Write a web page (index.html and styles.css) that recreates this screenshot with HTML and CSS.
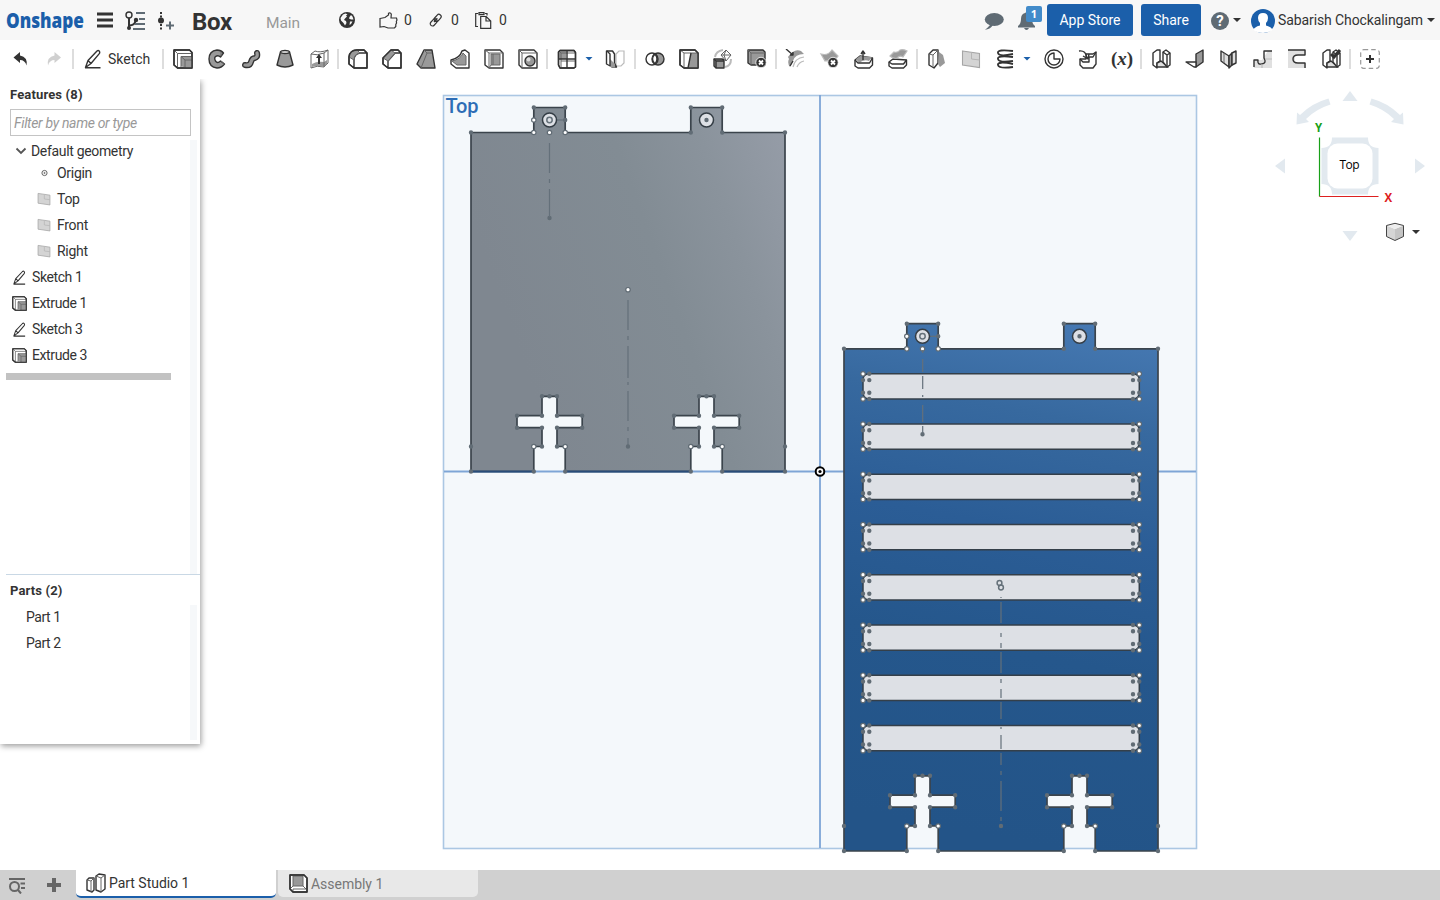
FILE: index.html
```html
<!DOCTYPE html>
<html lang="en">
<head>
<meta charset="utf-8">
<title>Box | Part Studio 1</title>
<link rel="stylesheet" href="styles.css">
</head>
<body>
<svg class="defs" width="0" height="0" aria-hidden="true">
  <defs>
    <symbol id="i-pencil" viewBox="0 0 20 20"><path class="ln" d="M2.500 18.500 5 11.500 14 2q1.200-1 2.200 0t.3 2.400L8 14.500 2.500 18.500zM5 11.500 8 14.500M2 18.800h15.500"/></symbol>
    <symbol id="i-extrude" viewBox="0 0 20 20"><path class="wh ln" d="M1 1h15.500L19 3.500V19H4.500L1 16z"/><path class="ln soft" d="M1.500 1.500 4.500 4.500V19M4.500 4.500H19"/><path class="md" d="M8 7.500h11V19h-7l-4-2z"/><path class="ln soft" d="M8 18V7.500h11M8 7.500l4 3.500h7M12 11v8"/><path class="ln" d="M1 1h15.500L19 3.500V19H4.500L1 16z"/></symbol>
    <symbol id="i-plane" viewBox="0 0 20 20"><path class="pl" d="M1.500 2 18.500 4.500v14l-17-2.500z"/><path class="pl-line" d="M10.500 3.500V10l8 1"/></symbol>
    <symbol id="i-frame" viewBox="0 0 20 20"><path class="lt" d="M2 4 6 1v12l12 5H6l-4-3z"/><path class="wh ln" d="M2 4 6 1h3v11l-3 2v5l-4-3z"/><path class="lt ln" d="m6 14 4-2 7 6H6z"/><path class="wh ln" d="m12 3 3-2 4 3v12l-3 2-4-5z"/><path class="ln" d="m12 3 4 3v12M16 6l3-2"/></symbol>
    <path id="cross-dots" d="M542 396.300h0M549.500 396.300h0M557 396.300h0M517 415.700h0M542 415.700h0M557 415.700h0M582.200 415.700h0M517 427.700h0M542 427.700h0M557 427.700h0M582.200 427.700h0M542 446.500h0M557 446.500h0M533.800 471.500h0M565.200 471.500h0"/>
    <path id="cross-open" d="M533.800 446.500h0M565.200 446.500h0"/>
    <g id="cross-marks"><use href="#cross-dots" class="dot"/><use href="#cross-open" class="ring"/><use href="#cross-open" class="core"/></g>
    <path id="tab-open" d="M533.800 120h0M533.800 132.500h0M549.500 132.500h0M565.200 132.500h0"/>
    <g id="tab-marks">
      <path class="guide" d="M556 120h9"/><circle class="hole" cx="549.500" cy="120" r="7"/><circle class="hole" cx="706.500" cy="120" r="7"/>
      <circle class="target" cx="549.500" cy="120" r="2.700"/>
      <path class="dot" d="M533.800 107.500h0M565.200 107.500h0M565.200 120h0M690.800 107.500h0M722.200 107.500h0M706.500 120h0M690.800 132.500h0M722.200 132.500h0M471 132.500h0M785 132.500h0M549.500 218h0"/>
      <use href="#tab-open" class="ring"/><use href="#tab-open" class="core"/>
    </g>
    <path id="slot-open" d="M863 0h0M863 25.200h0M1139.300 0h0M1139.300 25.200h0"/>
    <g id="slot">
      <path class="slot" d="M868 0h266q5.300 1 5.300 6v13q0 5-5.300 6.200H868q-5-1.200-5-6.200V6q0-5 5-6z"/>
      <path class="dot" d="M869.300 0h0M863 6.300h0M869.300 6.300h0M863 19h0M869.300 19h0M869.300 25.200h0M1133 0h0M1133 6.300h0M1139.300 6.300h0M1133 19h0M1139.300 19h0M1133 25.200h0"/>
      <use href="#slot-open" class="ring"/><use href="#slot-open" class="core"/>
    </g>
    <linearGradient id="steel" gradientUnits="userSpaceOnUse" x1="500" y1="300" x2="805" y2="190"><stop offset="0" stop-color="#7f8790"/><stop offset=".5" stop-color="#828c94"/><stop offset=".75" stop-color="#8a939c"/><stop offset="1" stop-color="#959ca7"/></linearGradient>
    <linearGradient id="blue" gradientUnits="userSpaceOnUse" x1="1060" y1="310" x2="960" y2="830"><stop offset="0" stop-color="#477ab4"/><stop offset=".2" stop-color="#37699f"/><stop offset=".42" stop-color="#2b5d96"/><stop offset=".65" stop-color="#25578c"/><stop offset="1" stop-color="#235488"/></linearGradient>
  </defs>
</svg>

<header class="topbar">
  <div class="doc">
    <svg class="logo" width="80" height="26" viewBox="0 0 80 26"><text x="0" y="19.500" textLength="78" lengthAdjust="spacingAndGlyphs">Onshape</text></svg>
    <svg class="menu" width="16" height="16"><path d="M0 2h16M0 8h16M0 14h16"/></svg>
    <svg class="versions" width="21" height="20" viewBox="0 0 21 20"><circle class="ln" cx="4" cy="4" r="3"/><path class="ln heavy" d="M4 7v10M4 14.500q6 0 6.500-5"/><circle class="ink" cx="4" cy="17" r="2"/><circle class="ink" cx="11" cy="9" r="2.200"/><path class="slate-line" d="M11 2h9M14 8h6M10 13h10M8 18h12"/></svg>
    <svg class="insert" width="18" height="20" viewBox="0 0 18 20"><path class="ln heavy" d="M4 1v2M4 4.500v2M4 13v2M4 16.500v2"/><circle class="ink" cx="4" cy="9.500" r="3"/><path class="slate-line" d="M9 14.500h8M13 10.500v8"/></svg>
    <h1>Box</h1>
    <span class="branch">Main</span>
    <svg class="globe" width="16" height="16" viewBox="0 0 16 16"><circle class="ink" cx="8" cy="8" r="8"/><path class="land" d="M4 2.500 6.500 1.500l2 .8-1.500 1.200 1 1L6 6.500 5 8l2 1 .5 2L6 13.500 4.500 11 2 8.500 1.500 6zM10.500 5l1.500-2 1.500 1.500 1 3h-2.500l-2-1zM11 9.500h2.500l-1.500 2.500-1.500 1z"/></svg>
    <svg class="like" width="19" height="17" viewBox="0 0 19 17"><path class="thin" d="M1 6.500 6 5.500 9.500 3V1.200q2-1 2.800 1L12 6h5.500l.5 2-.7 1.500.3 1.500-.8 1.500v2L15.500 16H9l-4-1.500-4 .5z"/></svg><b class="count">0</b>
    <svg class="link" width="13" height="14" viewBox="0 0 13 14"><g class="thin" transform="rotate(-48 6.500 7)"><rect x="-.5" y="5" width="8" height="4.500" rx="2.200"/><rect x="5.500" y="5" width="8" height="4.500" rx="2.200"/><path d="M4 7.200h5"/></g></svg><b class="count">0</b>
    <svg class="clip" width="17" height="17" viewBox="0 0 17 17"><path class="thin" d="M3 14.500H.7V1.500H3M4 .7h5v2H4zM10 1.500h2v2M5.700 4.500h5.500l4.500 4.500v7.300h-10zM11 4.500V9h4.700"/></svg><b class="count">0</b>
  </div>
  <div class="account">
    <svg class="chat" width="20" height="18" viewBox="0 0 20 18"><path class="slate" d="M2 9 6 12q-2.500 3-5 4.700Q6 16.500 9 12z"/><ellipse class="slate" cx="10.300" cy="6.500" rx="9.500" ry="6.400"/></svg>
    <div class="bell"><svg width="17" height="18" viewBox="0 0 17 18"><path class="slate" d="M7 1q1.500-1.500 3 0 4 1 4 6 0 5 3 7v1.500H0V14q3-2 3-7 0-5 4-6zM6 16h5q-1 2-2.500 2T6 16z"/></svg><span class="badge">1</span></div>
    <button class="btn store">App Store</button>
    <button class="btn share">Share</button>
    <span class="help">?</span><i class="caret"></i>
    <svg class="avatar" width="24" height="24" viewBox="0 0 24 24"><circle cx="12" cy="12" r="12"/><path d="M12 4q5 0 5 5 0 3-2 5v2.500q6 1.500 6.500 4.500-4 3-9.500 3t-9.500-3q.5-3 6.500-4.500V14q-2-2-2-5 0-5 5-5z"/></svg>
    <span class="user">Sabarish Chockalingam</span><i class="caret"></i>
  </div>
</header>

<nav class="toolbar">
  <div class="group history">
    <svg viewBox="0 0 20 20"><path class="ink" d="M3.500 8.500 10 3v3.500q8 1.500 6.500 10-1.500-5.500-6.500-5.500V14z"/></svg>
    <svg viewBox="0 0 20 20"><path class="faded" d="M17 8.500 10.500 3v3.500q-8 1.500-6.500 10 1.500-5.500 6.500-5.500V14z"/></svg>
  </div>
  <div class="sketch"><svg width="20" height="20"><use href="#i-pencil"/></svg><span>Sketch</span></div>
  <div class="group">
    <svg viewBox="0 0 20 20"><use href="#i-extrude"/></svg>
    <svg viewBox="0 0 20 20"><path class="md ln" d="M16.500 4Q14 1 10 1 2 2 2 10t8 9q4.500 0 7.500-4l-4-3q-3 3-5 0-2-4 1-5 2-1 4 1z"/><path class="ln soft" d="M14 7V3M14 12l3.500 3"/></svg>
    <svg viewBox="0 0 20 20"><path class="tube" d="M4 16q5 1 6-3t4-4q3-1 2-5"/><path class="tube-fill" d="M4 16q5 1 6-3t4-4q3-1 2-5"/></svg>
    <svg viewBox="0 0 20 20"><path class="md ln" d="M5.500 3 2 16q8 4 16 0L14.500 3z"/><ellipse class="wh ln" cx="10" cy="3" rx="4.500" ry="1.500"/></svg>
    <svg viewBox="0 0 20 20"><path class="wh ln soft" d="M2 5 6 2q5 2 13-1v13l-4 4q-7-2-13 1z"/><path class="md" d="M3 15q5-3 12-2l3-2v4l-3 3q-6-2-12 0z"/><path class="ln soft" d="M2 5q6 2 13-1l4-3M15 4v14"/><path class="ink" d="m10 5 3 4h-2v6H9V9H7z"/></svg>
  </div>
  <div class="group">
    <svg viewBox="0 0 20 20"><path class="wh ln" d="M1 8Q2 1 9 1h7l3 3v15H6l-5-4zM6 19V11q0-6 6-7h7"/><path class="md ln soft" d="M1 8Q2 1 9 1l3 3Q6 5 6 11z"/><path class="ln" d="M1 8Q2 1 9 1h7l3 3v15H6l-5-4z"/></svg>
    <svg viewBox="0 0 20 20"><path class="wh ln" d="M1 9 9 1h7l3 3v15H6l-5-4zM6 19V12l7-8h6"/><path class="md ln soft" d="m1 9 8-8 4 3-7 8z"/><path class="ln" d="M1 9 9 1h7l3 3v15H6l-5-4z"/></svg>
    <svg viewBox="0 0 20 20"><path class="md ln" d="M8 1h8l3 18H5L1 15z"/><path class="ln soft" d="M8 1l3 3h5M11 4 5 19"/></svg>
    <svg viewBox="0 0 20 20"><path class="wh ln" d="M1 11q9-2 11-9l3-1 4 3v15H6l-5-4z"/><path class="md ln soft" d="M2 12q9-2 11-8l3 3v9H7z"/></svg>
    <svg viewBox="0 0 20 20"><path class="wh ln" d="M1 1h15l3 3v15H5l-4-3z"/><path class="md ln soft" d="M7 5h9v11H7z"/><path class="ln soft" d="M5 19V4h14M1 1l4 3M9 5v11M7 16l-2 3"/></svg>
    <svg viewBox="0 0 20 20"><path class="wh ln" d="M1 1h15l3 3v15H4l-3-3z"/><path class="ln soft" d="M4 19V4h15M1 1l3 3"/><circle class="md ln" cx="12" cy="12" r="5"/><circle class="lt" cx="10.500" cy="10.500" r="2"/></svg>
  </div>
  <div class="group">
    <svg viewBox="0 0 20 20"><path class="wh ln" d="M1.500 3 3 1.500h14l1.500 2V18L17 19H3l-1.500-3z"/><path class="md" d="M2 2h7v8H2z"/><path class="ln soft" d="M2 2l2 2h14M4 4v15M4 12h14"/><path class="ln" d="M10 2v17M2 10h16M1.500 3 3 1.500h14l1.500 2V18L17 19H3l-1.500-3z"/></svg>
    <i class="caret blue first"></i>
    <svg viewBox="0 0 20 20"><path class="wh faint" d="m11 5 3-3h5v12l-3 3h-5z"/><path class="wh ln" d="M1.500 2h6l2 3v9l2 4H7l-5.500-3z"/><path class="md" d="m5 10 5 5v3.500H7l-2-1z"/><path class="ln" d="m2 2 3 3v12"/></svg>
  </div>
  <div class="group">
    <svg viewBox="0 0 20 20"><circle class="md ln" cx="13" cy="10" r="6"/><circle class="ln" cx="7" cy="10" r="6"/><path class="wh ln" d="M10 5q4 5 0 10-5-5 0-10z"/></svg>
    <svg viewBox="0 0 20 20"><path class="wh ln" d="M1 1h15l3 3v15H5l-4-3z"/><path class="md" d="M12 4h7v15H9z"/><path class="ln soft" d="M5 19V4h14M1 1l4 3"/><path class="ln" d="M12 4 9 19M1 1h15l3 3v15H5l-4-3z"/></svg>
    <svg viewBox="0 0 20 20"><path class="faint arc" d="M2 8q1-6 8-7M18 10q0 7-6 8"/><path class="md ln" d="M1 10h8l2 1v8H3l-2-2z"/><path class="ln" d="m1 10 2 2h8M3 12v7"/><path class="wh ln soft" d="m13 1 5 5-5 6-5-6zM13 1l-2 5 2 6M8 6h10"/></svg>
    <svg viewBox="0 0 20 20"><path class="md ln" d="M1 1h15l2 2v13H4l-3-2z"/><path class="ln soft" d="m1 1 3 3h14M4 4v12"/><circle class="halo" cx="14" cy="13.500" r="5.200"/><path class="x" d="m12 11.500 4 4m0-4-4 4"/></svg>
  </div>
  <div class="group">
    <svg viewBox="0 0 20 20"><path class="md" d="M2 8q6-9 13-6l3 3q-9 0-11 7-1 3-3 6-3-4-1-8z"/><path class="faint" d="M7 18Q9 9 18 8M11 18q2-5 7-6"/><path class="ln" d="m0 0 7 6M7 3v3H4M4 17l3-5"/></svg>
    <svg viewBox="0 0 20 20"><path class="md faint" d="M1 5q7 2 11-4l6 6-6 8q-3-4-7-3z"/><circle class="halo" cx="13" cy="13.500" r="5.200"/><path class="x" d="m11 11.500 4 4m0-4-4 4"/></svg>
    <svg viewBox="0 0 20 20"><path class="wh ln" d="m1 11 5-4 12.500 2v7l-3 3H4l-3-2z"/><path class="md" d="m2 10 4-3 12 1-3 4q-5-2-10 2z"/><path class="ln" d="m1 11 3 3h11.500l3-5M9 11V3M7 5l2-3 2 3"/></svg>
    <svg viewBox="0 0 20 20"><path class="wh ln" d="m1 13 4-3 13.500 1v5l-3 3H4l-3-2z"/><path class="ln" d="m1 13 3 2h11.500l3-4"/><path class="md faint" d="m2 7 4-4q4 1 6-2 3-1 7 1l-4 6q-3-2-6 1-4 1-7-2z"/></svg>
  </div>
  <div class="group">
    <svg viewBox="0 0 20 20"><path class="wh ln" d="M2 5 6 1h5v13l-4 5-5-3z"/><path class="ln soft" d="m2 5 4 1v12M6 6l5-5"/><path class="md" d="m12 3 4 3 2 8-5 4-2-3z"/></svg>
    <svg viewBox="0 0 20 20"><use href="#i-plane"/></svg>
    <svg viewBox="0 0 20 20"><path class="ln spring" d="M18 2Q2 0 3 4t15 1M18 8Q2 6 3 10t15 2M18 15Q2 12 3 16t15 2"/></svg>
    <i class="caret blue wide"></i>
    <svg viewBox="0 0 20 20"><circle class="ln" cx="10" cy="10" r="9"/><path class="ln" d="M10 4a6 6 0 1 0 6 6h-6z"/></svg>
    <svg viewBox="0 0 20 20"><path class="wh ln" d="M2 10h6V5h7l3-2v12l-3 4H5l-3-3z"/><path class="ln" d="m2 10 3 3h6V8h4l3-5"/><path class="ln" d="M1 2q7-1 8 7M5 7l5 3 1-5"/></svg>
    <span class="variable">(<em>x</em>)</span>
  </div>
  <div class="group">
    <svg viewBox="0 0 20 20"><use href="#i-frame"/></svg>
    <svg viewBox="0 0 20 20"><path class="md ln" d="m11 5 7-4v12l-7 5z"/><path class="wh ln" d="M1 13h10v5H9z"/></svg>
    <svg viewBox="0 0 20 20"><path class="lt ln" d="m2 2 8 5v11l-8-6z"/><path class="ln soft" d="M5 4v10"/><path class="md ln" d="m10 7 3-3v12l-3 3z"/><path class="lt ln" d="m13 4 4-2v12l-4 2z"/></svg>
    <svg viewBox="0 0 20 20"><path class="lt" d="M1 11h8l6-9h4v17H1z"/><path class="ln" d="M1 18v-7h4q-1 5 4 4 5-1 2-6V2h8"/><path class="faint" d="M9 15v4M12 10h7"/></svg>
    <svg viewBox="0 0 20 20"><path class="lt" d="M1 1h18v5H8v8h11v5H1z"/><path class="ln" d="M1 1h17v5h-7q-5 0-5 4t5 4h7v5"/></svg>
    <svg viewBox="0 0 20 20"><use href="#i-frame"/><path class="ln check" d="m10 5 3 3 6-7"/></svg>
  </div>
  <div class="group">
    <svg viewBox="0 0 20 20"><rect class="add-box" x=".7" y=".7" width="18.600" height="18.600" rx="3"/><path class="ln add" d="M10 6v8M6 10h8"/></svg>
  </div>
</nav>

<main class="workspace">
  <svg class="viewport" width="1440" height="791" viewBox="0 79 1440 791">
    <rect class="datum" x="443.500" y="95.500" width="753" height="753"/>
    <path class="axis" d="M820 95v753M444 471.500h752"/>
    <text class="datum-name" x="445.500" y="113" textLength="33">Top</text>

    <path class="part" fill="url(#steel)" d="M471 471.500V132.500H533.800V107.500H565.200V132.500H690.800V107.500H722.200V132.500H785V471.500H722.200V446.500H714V427.700H739.200V415.700H714V396.300H699V415.700H674V427.700H699V446.500H690.800V471.500H565.200V446.500H557V427.700H582.200V415.700H557V396.300H542V415.700H517V427.700H542V446.500H533.800V471.500Z"/>
    <path class="base-edge" d="M471 471.500h63M565 471.500h126M722 471.500h63"/>
    <use href="#tab-marks"/>
    <path class="guide" d="M549.500 143v30M549.500 179v4M549.500 189v28"/>
    <use href="#cross-marks"/><use href="#cross-marks" x="157"/>
    <path class="guide" d="M628 300v30M628 336v4M628 346v32M628 382v3M628 391v30M628 427v4M628 438v8"/>
    <path class="dot" d="M471 446.500h0M471 471.500h0M785 446.500h0M785 471.500h0M628 446.500h0"/>
    <path class="ring" d="M628 289.700h0"/><path class="core" d="M628 289.700h0"/>

    <path class="part" fill="url(#blue)" d="M844 851V348.800H906.800V323.700H938.200V348.800H1063.800V323.700H1095.200V348.800H1158V851H1095.200V826H1087V807.200H1112.200V795.200H1087V775.800H1072V795.200H1047V807.200H1072V826H1063.800V851H938.200V826H930V807.200H955.200V795.200H930V775.800H915V795.200H890V807.200H915V826H906.800V851Z"/>
    <use href="#slot" y="373.800"/><use href="#slot" y="424"/><use href="#slot" y="474.200"/><use href="#slot" y="524.500"/>
    <use href="#slot" y="574.700"/><use href="#slot" y="625"/><use href="#slot" y="675.200"/><use href="#slot" y="725.500"/>
    <use href="#tab-marks" x="373" y="216.300"/>
    <path class="guide" d="M922.700 350v3M922.700 359v13M922.700 376v13M922.700 395v2M922.700 405v17M922.700 426v8"/>
    <use href="#cross-marks" x="373" y="379.500"/><use href="#cross-marks" x="530" y="379.500"/>
    <path class="guide" d="M1001 597v1M1001 602v21M1001 633v4M1001 643v5M1001 652v21M1001 679v4M1001 689v9M1001 702v17M1001 727v2M1001 735v14M1001 753v12M1001 771v4M1001 781v30M1001 817v4"/>
    <path class="dot" d="M1001 826h0M844 826h0M844 851h0M1158 826h0M1158 851h0"/>
    <circle class="target" cx="999.500" cy="583" r="2.400"/><circle class="target" cx="1001" cy="587.500" r="2.400"/>
    <circle class="origin" cx="820" cy="471.500" r="4.300"/><circle cx="820" cy="471.500" r="1.600"/>

    <g class="view-control">
      <path d="m1350 91 7.500 10h-15zM1350 241l7.500-10h-15zM1275 166l10-7.500v15zM1425 166l-10-7.500v15z"/>
      <path d="M1328.500 98.500 1330.500 104.500Q1316 109 1306 119l3 3-12.500 2.500.5-12 3 2.500Q1312 103 1328.500 98.500zM1371.500 98.500 1369.500 104.500Q1384 109 1394 119l-3 3 12.500 2.500-.5-12-3 2.500Q1388 103 1371.500 98.500z"/>
      <path d="M1332 137.500h36q0 10.500 10.500 10.500v36q-10.500 0-10.500 10.500h-36q0-10.500-10.500-10.500v-36q10.500 0 10.500-10.500z"/>
      <rect class="face" x="1327.500" y="143.500" width="45" height="45" rx="10"/>
    </g>
    <path class="y-axis" d="M1319.500 137.500v59"/><path class="x-axis" d="M1319.500 196.500h59"/>
    <text class="face-name" x="1339.500" y="169" textLength="20">Top</text>
    <text class="y-name" x="1315" y="132">Y</text><text class="x-name" x="1384.500" y="201.500">X</text>
    <path class="cube-left" d="m1386.500 225.500 8.500 3.500v11.500l-8.500-4z"/><path class="cube-right" d="m1403.500 225.500-8.500 3.500v11.500l8.500-4z"/><path class="cube-top" d="m1386.500 225.500 8.500-2.200 8.500 2.200-8.500 3.500z"/>
    <path class="cube-edge" d="m1386.500 225.500 8.500-2.200 8.500 2.200v11l-8.500 4-8.500-4z"/>
    <path class="cube-caret" d="M1412 230h8l-4 4z"/>
  </svg>

  <aside class="panel">
    <section class="features">
      <h2>Features (8)</h2>
      <input type="text" placeholder="Filter by name or type">
      <ul>
        <li class="folder"><svg width="12" height="8"><path d="m1.500 1.500 4.500 4.500 4.500-4.500"/></svg>Default geometry</li>
        <li class="child origin-row"><svg width="14" height="14" viewBox="0 0 14 14"><circle class="point" cx="7.500" cy="7" r="2.600"/><circle class="point" cx="7.500" cy="7" r=".6"/></svg>Origin</li>
        <li class="child"><svg width="14" height="14"><use href="#i-plane"/></svg>Top</li>
        <li class="child"><svg width="14" height="14"><use href="#i-plane"/></svg>Front</li>
        <li class="child"><svg width="14" height="14"><use href="#i-plane"/></svg>Right</li>
        <li><svg width="15" height="15"><use href="#i-pencil"/></svg>Sketch 1</li>
        <li><svg width="15" height="15"><use href="#i-extrude"/></svg>Extrude 1</li>
        <li><svg width="15" height="15"><use href="#i-pencil"/></svg>Sketch 3</li>
        <li><svg width="15" height="15"><use href="#i-extrude"/></svg>Extrude 3</li>
      </ul>
      <div class="rollback"></div>
    </section>
    <section class="parts">
      <h2>Parts (2)</h2>
      <ul><li>Part 1</li><li>Part 2</li></ul>
    </section>
  </aside>
</main>

<footer class="tabs">
  <svg class="find" width="17" height="16" viewBox="0 0 17 16"><path d="M0 1h16M11.500 5.500H16M12 10h4M9 12l3 3.500"/><circle cx="5.500" cy="8.500" r="4.500"/></svg>
  <svg class="plus" width="14" height="14"><path d="M7 0v14M0 7h14"/></svg>
  <div class="tab active"><svg width="20" height="20" viewBox="0 0 20 20"><path class="wh ln" d="M1 7 3 5h5v12l-2 2-5-2z"/><path class="ln soft" d="m1 7 4 1v11M5 8l3-3"/><path class="wh ln" d="m10 3 3-2 6 1v14l-4 3-5-2z"/><path class="ln soft" d="m10 3 5 2v14M15 5l4-3"/></svg><span>Part Studio 1</span></div>
  <div class="tab"><svg width="20" height="20" viewBox="0 0 20 20"><path class="wh ln" d="M2 1h14l3 3v14H5l-3-3z"/><path class="md ln soft" d="M5 2h10v10H5z"/><path class="ln soft" d="m2 15 3-3M15 12l3 3H5v3"/><path class="ln" d="M2 1h14l3 3v14H5l-3-3z"/></svg><span>Assembly 1</span></div>
</footer>
</body>
</html>
```

FILE: styles.css
```css
* { box-sizing: border-box; }
body { margin: 0; width: 1440px; height: 900px; overflow: hidden; display: flex; flex-direction: column; background: #fff; color: #333; font: 14px Roboto, "Open Sans", sans-serif; }
svg { display: block; flex: none; }
h1, h2, ul { margin: 0; padding: 0; list-style: none; }

/* shared icon paint */
.ln { stroke: #333; stroke-width: 1.4; stroke-linejoin: round; fill: none; }
.md { fill: #999; }
.lt { fill: #e0e0e0; }
.wh { fill: #fff; }
.soft { stroke: #666; stroke-width: 1; }
.heavy { stroke-width: 2; }
.thin { fill: none; stroke: #333; stroke-width: 1.2; }
.point { fill: none; stroke: #666; stroke-width: 1; }
.ink { fill: #333; }
.slate { fill: #5f6b74; }
.slate-line { fill: none; stroke: #5f6b74; stroke-width: 2; }
.faded { fill: #d0d0d0; }
.faint { stroke: #bbb; stroke-width: 1.2; }
path.faint:not(.md):not(.wh) { fill: none; }
.arc { stroke-width: 2; }
.halo { fill: #333; stroke: #fff; stroke-width: .8; }
.x { stroke: #fff; stroke-width: 1.8; }
.pl { fill: #d4d4d4; stroke: #a5a5a5; stroke-width: 1.1; }
.pl-line { fill: none; stroke: #b5b5b5; stroke-width: 1; }
.tube { fill: none; stroke: #333; stroke-width: 6; stroke-linecap: round; }
.tube-fill { fill: none; stroke: #999; stroke-width: 3.2; stroke-linecap: round; }
.spring { stroke-width: 1.8; }
.check { stroke-width: 3; stroke-linejoin: miter; }
.add-box { fill: none; stroke: #999; stroke-dasharray: 4.5 3; stroke-width: 1.2; }
.add { stroke-width: 2; }
.land { fill: #f7f7f7; }
.caret { flex: none; width: 8px; height: 4px; background: #333; clip-path: polygon(0 0, 100% 0, 50% 100%); }

.topbar { height: 40px; flex: none; display: flex; justify-content: space-between; background: #f7f7f7; }
.doc, .account { display: flex; align-items: center; height: 40px; }
.doc { padding-left: 6px; }
.logo { margin-top: 1px; overflow: visible; }
.logo text { font: 800 20.5px "Open Sans", sans-serif; fill: #1b5faa; }
.menu { margin-left: 11px; stroke: #333; stroke-width: 3; }
.versions { margin-left: 12px; margin-top: 2px; }
.insert { margin-left: 11px; margin-top: 2px; }
h1 { width: 74px; margin-left: 17px; font-size: 24px; line-height: 28px; padding-top: 3px; font-weight: 700; letter-spacing: -.3px; }
.branch { width: 73px; font-size: 15.500px; line-height: 20px; padding-top: 6px; height: 26px; color: #999; letter-spacing: -.1px; }
.like { margin-left: 24px; }
.count { width: 8px; margin-left: 6px; font-weight: 400; font-size: 14px; }
.link { margin-left: 17px; }
.link + .count { margin-left: 9px; }
.clip { margin-left: 16px; }
.clip + .count { margin-left: 7px; }
.account { padding-right: 5px; }
.chat { margin-top: 3px; }
.bell { position: relative; margin-left: 14px; height: 40px; width: 29px; padding-top: 12px; }
.badge { position: absolute; left: 8px; top: 6px; width: 16px; height: 16px; border-radius: 2px; background: #428bca; color: #fff; text-align: center; font: 700 11px/16px "Open Sans", sans-serif; }
.btn { height: 32px; padding: 0; border: 0; border-radius: 3px; background: #1b5faa; color: #fff; font: 14px Roboto, sans-serif; }
.store { width: 86px; }
.share { width: 60px; margin-left: 8px; }
.help { width: 18px; height: 18px; margin: 2px 4px 0 10px; border-radius: 50%; background: #5f6b74; color: #fff; font: 700 15px/18px Roboto, sans-serif; text-align: center; }
.avatar { margin-left: 10px; margin-top: 1px; fill: #1b5faa; }
.avatar path { fill: #fff; }
.user { width: 145px; margin: 0 4px 0 3px; white-space: nowrap; letter-spacing: -.1px; }

.toolbar { height: 39px; flex: none; display: flex; align-items: center; padding: 0 0 2px 3px; }
.group, .sketch { display: flex; align-items: center; height: 37px; position: relative; }
.group > svg { width: 34px; height: 20px; }
.history { width: 68px; }
.sketch { width: 85px; margin-left: 5px; padding-left: 7px; gap: 5px; }
.group + .group, .sketch + .group { margin-left: 5px; }
.sketch span { white-space: nowrap; }
.group + .group::before, .sketch + .group::before, .sketch::before { content: ""; position: absolute; left: -4px; top: 9px; width: 2px; height: 20px; background: #ddd; }
.caret.blue { background: #1b5faa; }
.caret.first { margin: 0 5px 0 1px; }
.caret.wide { margin: 0 6px 0 1px; }
.group:nth-child(6) { margin-left: 6px; }
.variable { width: 34px; text-align: center; font: 700 19px/20px "Liberation Serif", serif; }

.workspace { height: 791px; flex: none; display: grid; }
.viewport, .panel { grid-area: 1 / 1; }
.datum { fill: #f4f8fb; stroke: #abc7e3; stroke-width: 1.600; }
.axis { stroke: #7ea5d6; stroke-width: 1.800; }
.datum-name { font: 500 20px Roboto, sans-serif; fill: #2d6db6; }
.part { stroke: #3b444c; stroke-width: 1.700; }
.base-edge { stroke: #294c78; stroke-width: 2; }
.hole { fill: #dde0e5; stroke: #343d45; stroke-width: 1.500; }
.slot { fill: #dde0e5; stroke: #343f49; stroke-width: 1.500; }
.guide { stroke: #64707a; stroke-width: 1.200; fill: none; }
.target { fill: none; stroke: #65717a; stroke-width: 1.500; }
.dot, .ring, .core { fill: none; stroke-linecap: round; stroke: #616c75; stroke-width: 4.400; }
.ring { stroke-width: 5.600; }
.core { stroke: #fff; stroke-width: 3.200; }
.origin { fill: #fff; stroke: #000; stroke-width: 2; }
.view-control { fill: #e2e9ef; }
.face { fill: #fff; }
.face-name { font: 12px "Open Sans", sans-serif; fill: #000; }
.y-axis { stroke: #18a018; stroke-width: 1.200; }
.x-axis { stroke: #dd2020; stroke-width: 1.200; }
.y-name, .x-name { font: 700 11.5px "Open Sans", sans-serif; fill: #18a018; }
.x-name { fill: #dd2020; }
.cube-left { fill: #d5d5d5; }
.cube-right { fill: #c4c4c4; }
.cube-top { fill: #eee; }
.cube-edge { fill: none; stroke: #444; }
.cube-caret { fill: #333; }

.panel { z-index: 1; width: 200px; height: 665px; background: #fff; box-shadow: 1px 2px 6px rgba(0, 0, 0, .4); clip-path: inset(0 -10px -10px 0); }
.features { height: 496px; margin-left: 6px; padding-top: 7px; border-bottom: 1px solid #c9d8e5; background: linear-gradient(#f6f8fa, #f6f8fa) 184px 61px / 7px 435px no-repeat; }
.features h2, .parts h2 { padding-left: 4px; font: 700 13px/17px Roboto, sans-serif; letter-spacing: .15px; }
.features input { display: block; width: 181px; height: 27px; margin: 6px 0 3px 4px; padding: 0 3px; border: 1px solid #c4c4c4; font: italic 14px Roboto, sans-serif; letter-spacing: -.33px; }
.features input::placeholder { color: #999; }
.features li { height: 26px; display: flex; align-items: center; padding-left: 6px; gap: 5px; letter-spacing: -.4px; }
.features .folder { height: 24px; padding-left: 9px; gap: 4px; letter-spacing: -.33px; }
.folder path { fill: none; stroke: #555; stroke-width: 1.800; }
.features .child { padding-left: 31px; gap: 6px; letter-spacing: -.3px; }
.features .origin-row { height: 20px; }
.features li.origin-row + li { margin-top: 3px; }
.rollback { width: 165px; height: 7px; margin-top: 5px; background: #c2c2c2; }
.parts { height: 169px; padding: 7px 0 0 6px; background: linear-gradient(#f6f8fa, #f6f8fa) 190px 30px / 7px 135px no-repeat; }
.parts ul { padding-top: 5px; }
.parts li { height: 26px; line-height: 26px; padding-left: 20px; letter-spacing: -.45px; }

.tabs { height: 30px; flex: none; display: flex; align-items: flex-start; background: #d0d0d0; padding-left: 9px; }
.find { margin-top: 8px; }
.find, .plus { fill: none; stroke: #666; stroke-width: 2; }
.plus { margin: 8px 15px 0 21px; stroke-width: 4; }
.tab { display: flex; align-items: center; width: 200px; height: 27px; margin-right: 2px; padding-left: 10px; gap: 3px; border-radius: 0 0 5px 5px; background: #e8e8e8; color: #777; }
.tab.active { height: 28px; background: #fff; color: #333; border-bottom: 2px solid #1b5faa; }
.tab span { letter-spacing: -.03px; }
```
